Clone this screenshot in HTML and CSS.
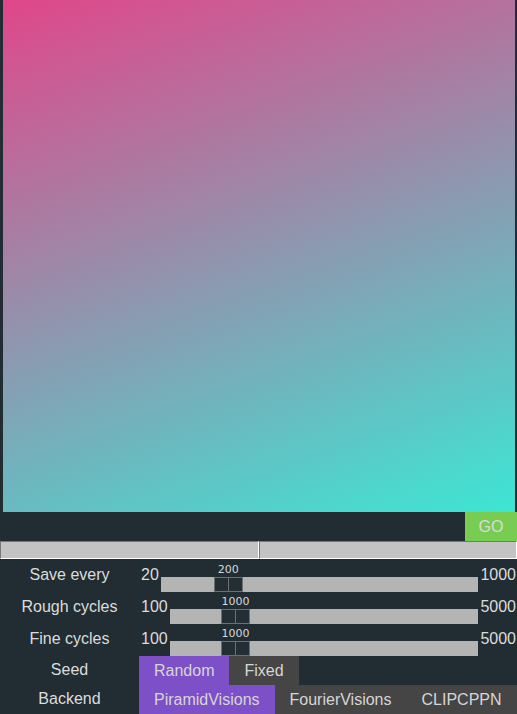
FILE: index.html
```html
<!DOCTYPE html>
<html>
<head>
<meta charset="utf-8">
<link rel="stylesheet" href="styles.css">
</head>
<body>
<div class="canvas"></div>
<div class="go-row"><button class="go">GO</button></div>
<div class="progress-row"><div class="bar"></div><div class="bar"></div></div>
<div class="controls">
  <div class="label">Save every</div>
  <div class="slider-row">
    <span class="lim">20</span>
    <div class="slider">
      <div class="track"><div class="thumb" style="--f:0.1837"><span class="val">200</span></div></div>
    </div>
    <span class="lim">1000</span>
  </div>

  <div class="label">Rough cycles</div>
  <div class="slider-row">
    <span class="lim">100</span>
    <div class="slider">
      <div class="track"><div class="thumb" style="--f:0.1837"><span class="val">1000</span></div></div>
    </div>
    <span class="lim">5000</span>
  </div>

  <div class="label">Fine cycles</div>
  <div class="slider-row">
    <span class="lim">100</span>
    <div class="slider">
      <div class="track"><div class="thumb" style="--f:0.1837"><span class="val">1000</span></div></div>
    </div>
    <span class="lim">5000</span>
  </div>

  <div class="label opt">Seed</div>
  <div class="options">
    <button class="opt-btn active">Random</button>
    <button class="opt-btn">Fixed</button>
  </div>

  <div class="label opt">Backend</div>
  <div class="options">
    <button class="opt-btn active">PiramidVisions</button>
    <button class="opt-btn">FourierVisions</button>
    <button class="opt-btn">CLIPCPPN</button>
  </div>
</div>
</body>
</html>
```
FILE: styles.css
```css
html, body {
  margin: 0;
  padding: 0;
  background: #222d33;
  font-family: "Liberation Sans", Arial, sans-serif;
  font-size: 16px;
  color: #dcdcdc;
  overflow: hidden;
}
.canvas {
  width: 512px;
  height: 512px;
  margin: 0 auto;
  background: linear-gradient(160deg, #e0478a 0%, #3de6d4 100%);
}
.go-row {
  display: flex;
  justify-content: flex-end;
  height: 29px;
}
.go {
  width: 52px;
  height: 29px;
  border: none;
  padding: 0;
  margin: 0;
  background: #78cc51;
  color: #dadada;
  font-family: "Liberation Sans", Arial, sans-serif;
  font-size: 16px;
}
.progress-row {
  display: flex;
  height: 18px;
  margin-bottom: 1px;
}
.bar {
  flex: 1;
  box-sizing: border-box;
  background: #c3c3c3;
  border-top: 1px solid #777;
  border-left: 1px solid #777;
  border-bottom: 1px solid #fff;
  border-right: 1px solid #fff;
}
.controls {
  display: grid;
  grid-template-columns: 139px 1fr;
}
.label {
  text-align: center;
  height: 32px;
  padding-top: 6px;
  box-sizing: border-box;
  line-height: 18px;
  white-space: nowrap;
}
.label.opt {
  height: 29px;
  padding-top: 5px;
}
.slider-row {
  display: flex;
  gap: 2px;
  padding-left: 2px;
  padding-right: 1px;
  height: 32px;
}
.lim {
  padding-top: 6px;
  line-height: 18px;
}
.slider {
  flex: 1;
  padding-top: 17px;
}
.track {
  position: relative;
  height: 15px;
  background: #b4b4b4;
}
.thumb {
  position: absolute;
  top: 0;
  left: calc((100% - 29px) * var(--f));
  width: 29px;
  height: 15px;
  box-sizing: border-box;
  background: #232e35;
  border: 1px solid #6f6f6f;
}
.thumb::after {
  content: "";
  position: absolute;
  left: 13px;
  top: 0;
  width: 1px;
  height: 13px;
  background: #6f6f6f;
}
.thumb .val {
  position: absolute;
  left: 50%;
  bottom: 15px;
  transform: translateX(-50%);
  font-family: "DejaVu Sans", sans-serif;
  font-size: 11px;
  line-height: 13px;
  color: #d8d8d8;
}
.options {
  display: flex;
  height: 29px;
}
.opt-btn {
  border: none;
  margin: 0;
  padding: 0 15px;
  height: 29px;
  background: #454545;
  color: #d6d6d6;
  font-family: "Liberation Sans", Arial, sans-serif;
  font-size: 16px;
}
.opt-btn.active {
  background: #7d50c8;
}
```
